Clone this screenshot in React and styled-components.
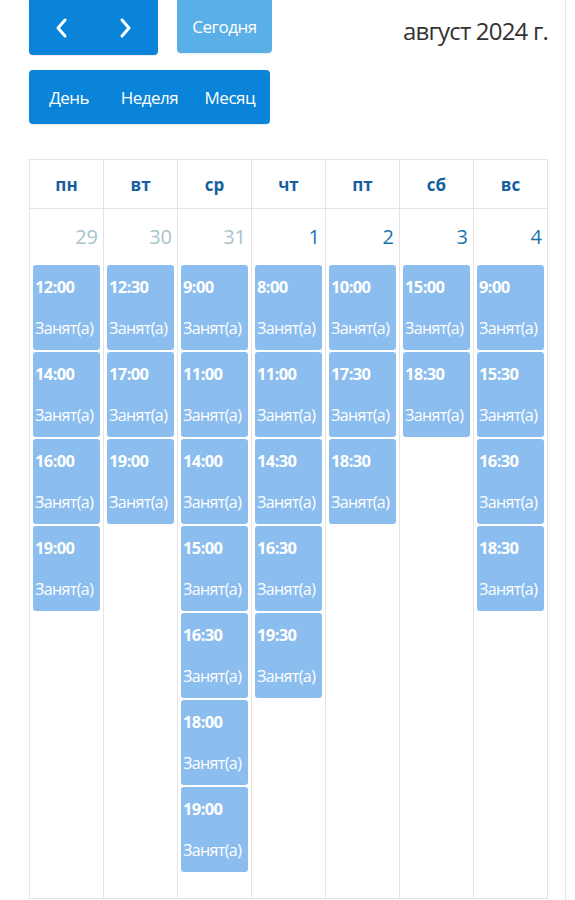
import styled, { createGlobalStyle } from 'styled-components'

const GlobalStyle = createGlobalStyle`
  html, body {
    margin: 0;
    padding: 0;
    background: #fff;
  }
  body {
    font-family: "Open Sans", "Noto Sans", sans-serif;
  }
`

const Page = styled.div`
  width: 566px;
  height: 900px;
  box-sizing: border-box;
  border-right: 1px solid #e4e4e4;
  padding: 0 17px 0 29px;
  overflow: hidden;
`

const Toolbar = styled.div`
  display: flex;
  justify-content: space-between;
  align-items: flex-start;
`

const ButtonsCol = styled.div`
  display: flex;
  flex-direction: column;
  gap: 15px;
`

const ButtonRow = styled.div`
  display: flex;
  gap: 19px;
`

const Group = styled.div`
  display: flex;
  height: ${p => p.$h}px;
  width: ${p => p.$w}px;
  border-radius: ${p => p.$top ? '0 0 4px 4px' : '4px'};
  background: ${p => p.$light ? '#5aafe6' : '#0a84d8'};
  box-shadow: 0 1px 1px rgba(0, 0, 0, 0.08);
  overflow: hidden;
`

const Btn = styled.button`
  flex: 1;
  border: 0;
  background: transparent;
  color: #fff;
  font-family: inherit;
  font-size: 17px;
  letter-spacing: -0.5px;
  display: flex;
  align-items: center;
  justify-content: center;
  padding: 0;
  cursor: pointer;
`

const Title = styled.h2`
  margin: 14px 0 0;
  font-weight: normal;
  font-size: 24px;
  letter-spacing: -0.8px;
  color: #333;
`

const Grid = styled.div`
  margin-top: 35px;
  display: grid;
  grid-template-columns: repeat(7, minmax(0, 1fr));
  grid-template-rows: 49px 1fr;
  height: 738px;
  border-top: 1px solid #e4e4e4;
  border-left: 1px solid #e4e4e4;
  border-bottom: 1px solid #e4e4e4;
`

const HeadCell = styled.div`
  border-right: 1px solid #e4e4e4;
  border-bottom: 1px solid #e4e4e4;
  display: flex;
  align-items: center;
  justify-content: center;
  color: #155fa0;
  font-weight: bold;
  font-size: 17px;
`

const DayCell = styled.div`
  border-right: 1px solid #e4e4e4;
  display: flex;
  flex-direction: column;
  gap: 2px;
  padding: 0 3px;
  min-width: 0;
`

const DayNum = styled.div`
  height: 54px;
  display: flex;
  align-items: center;
  justify-content: flex-end;
  padding-right: 2px;
  font-size: 20px;
  color: ${p => p.$other ? '#a9c3cb' : '#1a74ad'};
`

const Event = styled.div`
  height: 85px;
  box-sizing: border-box;
  background: #8bbdee;
  border-radius: 3px;
  color: #fff;
  padding: 10px 2px 0;
  white-space: nowrap;
  overflow: hidden;
  font-size: 16px;
  letter-spacing: -0.6px;
`

const Time = styled.div`
  font-weight: bold;
  font-size: 16.5px;
  height: 42px;
`

const Chevron = ({ dir }) => (
  <svg width="14" height="22" viewBox="0 0 14 22" fill="none">
    <path
      d={dir === 'left' ? 'M11 3L4 11l7 8' : 'M3 3l7 8-7 8'}
      stroke="#fff"
      strokeWidth="3"
      strokeLinecap="round"
      strokeLinejoin="round"
    />
  </svg>
)

const days = [
  { name: 'пн', num: 29, other: true, times: ['12:00', '14:00', '16:00', '19:00'] },
  { name: 'вт', num: 30, other: true, times: ['12:30', '17:00', '19:00'] },
  { name: 'ср', num: 31, other: true, times: ['9:00', '11:00', '14:00', '15:00', '16:30', '18:00', '19:00'] },
  { name: 'чт', num: 1, times: ['8:00', '11:00', '14:30', '16:30', '19:30'] },
  { name: 'пт', num: 2, times: ['10:00', '17:30', '18:30'] },
  { name: 'сб', num: 3, times: ['15:00', '18:30'] },
  { name: 'вс', num: 4, times: ['9:00', '15:30', '16:30', '18:30'] },
]

export default function App() {
  return (
    <>
      <GlobalStyle />
      <Page>
        <Toolbar>
          <ButtonsCol>
            <ButtonRow>
              <Group $w={129} $h={55} $top>
                <Btn aria-label="prev"><Chevron dir="left" /></Btn>
                <Btn aria-label="next"><Chevron dir="right" /></Btn>
              </Group>
              <Group $w={95} $h={53} $top $light>
                <Btn>Сегодня</Btn>
              </Group>
            </ButtonRow>
            <Group $w={241} $h={54}>
              <Btn>День</Btn>
              <Btn>Неделя</Btn>
              <Btn>Месяц</Btn>
            </Group>
          </ButtonsCol>
          <Title>август 2024 г.</Title>
        </Toolbar>

        <Grid>
          {days.map(d => (
            <HeadCell key={d.name}>{d.name}</HeadCell>
          ))}
          {days.map(d => (
            <DayCell key={d.name}>
              <DayNum $other={d.other}>{d.num}</DayNum>
              {d.times.map(t => (
                <Event key={t}>
                  <Time>{t}</Time>
                  <div>Занят(а)</div>
                </Event>
              ))}
            </DayCell>
          ))}
        </Grid>
      </Page>
    </>
  )
}
